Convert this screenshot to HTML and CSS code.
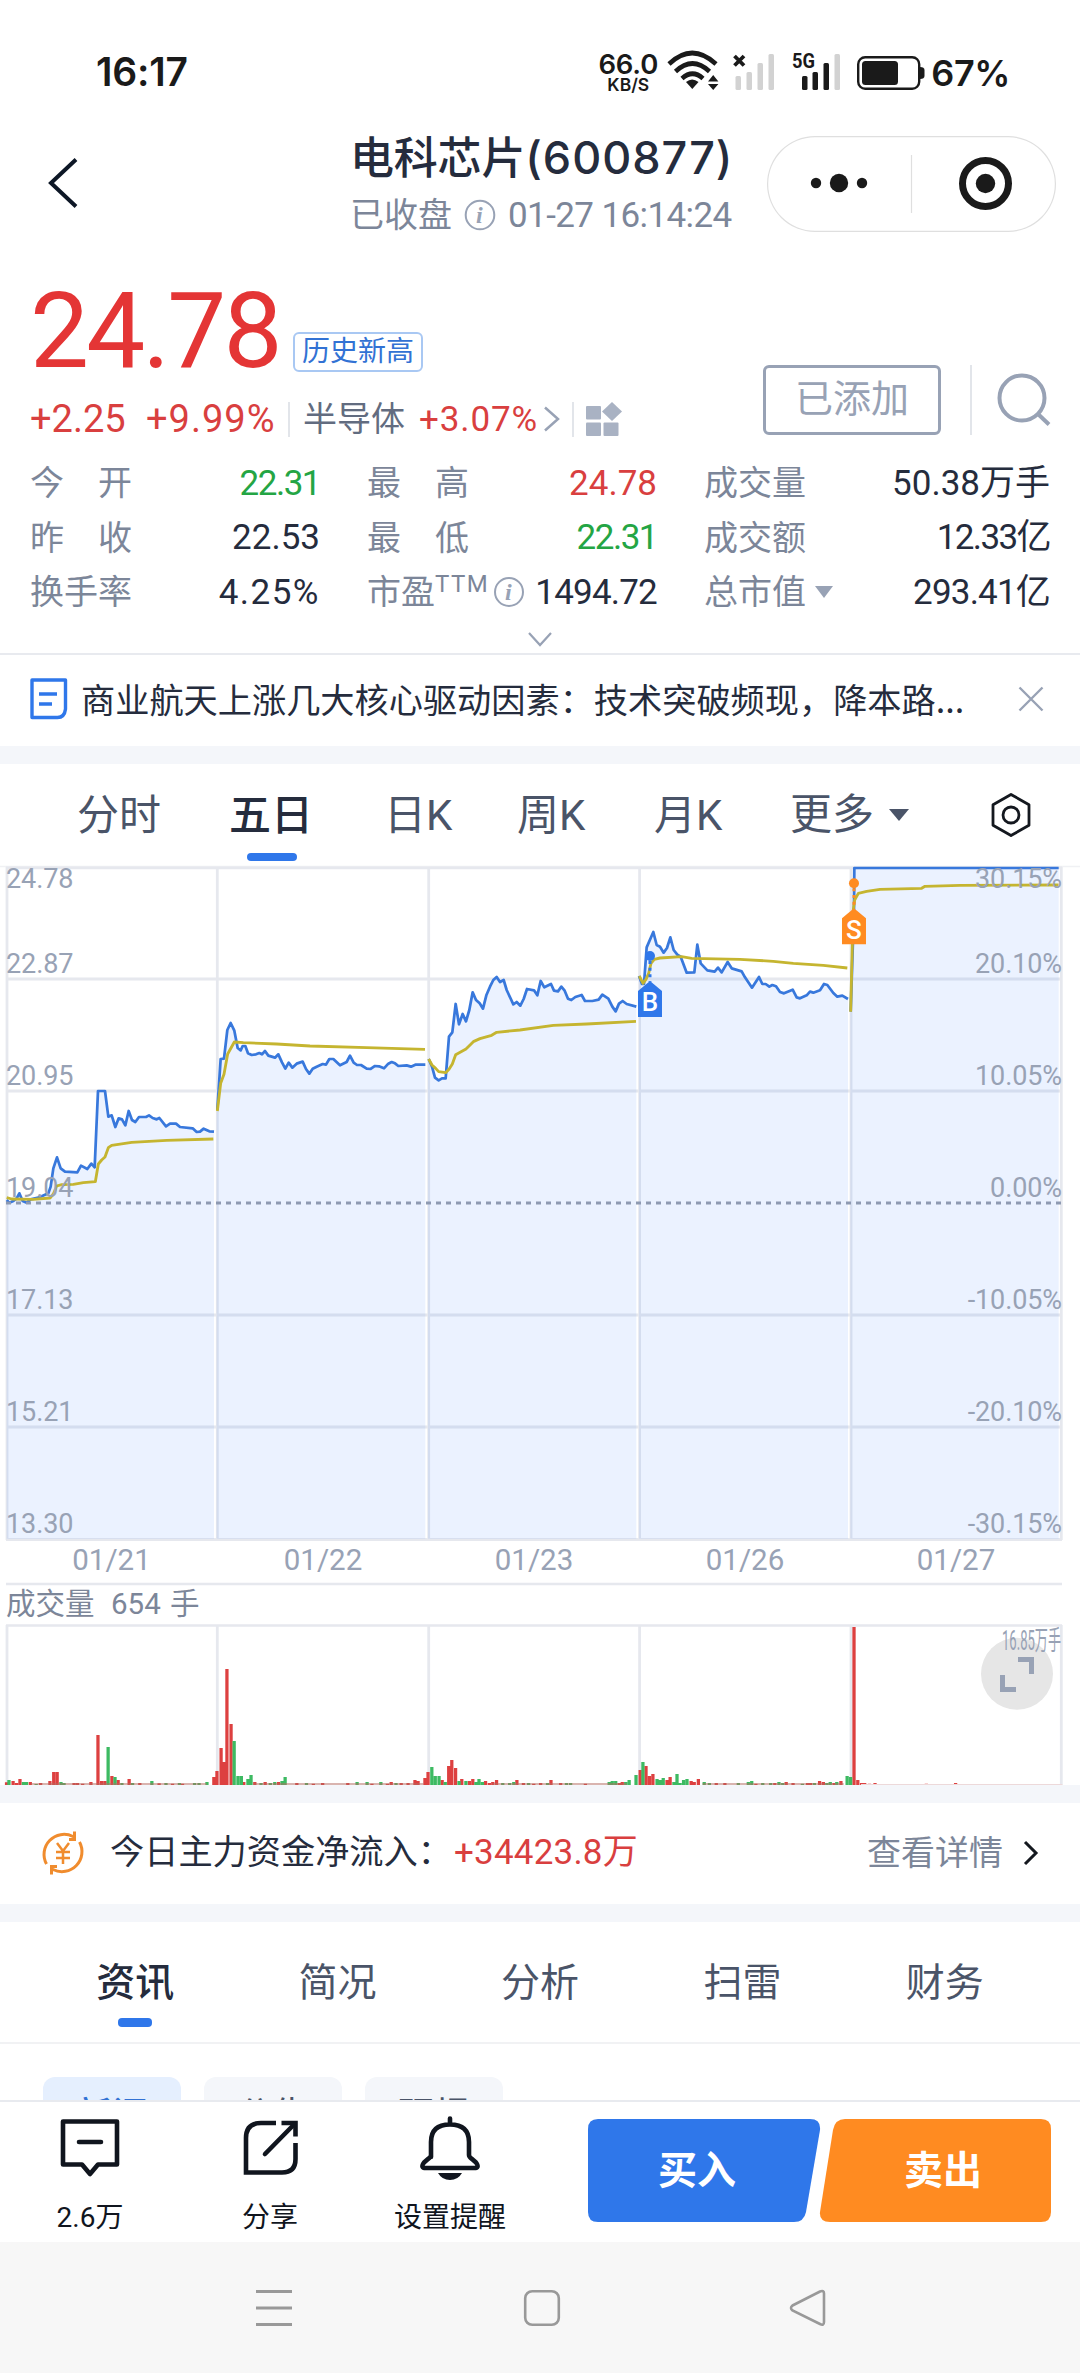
FILE: index.html
```html
<!DOCTYPE html>
<html lang="zh-CN">
<head>
<meta charset="utf-8">
<title>电科芯片(600877)</title>
<link rel="stylesheet" href="styles.css">
</head>
<body>
<div class="status">
  <span class="clock">16:17</span>
  <div class="status-right">
    <div class="speed"><b>66.0</b><i>KB/S</i></div>
    <svg class="signals" width="262" height="44" viewBox="0 0 262 44">
      <g fill="none" stroke="#1a1a1a" stroke-width="4.6">
        <path d="M2 16Q25-6 49 16"/><path d="M8.500 23.500Q25.500 7.500 42.500 23.500"/><path d="M15 30.500Q25.500 21 36 30.500"/>
      </g>
      <path d="M19 34Q25 29 31.500 34L25.300 41z" fill="#1a1a1a"/>
      <path d="M41 33.500h10.400L46.200 27zM41 36h10.400L46.200 42z" fill="#1a1a1a"/>
      <path d="M67.500 8l9.500 9.500M77 8l-9.500 9.500" stroke="#1a1a1a" stroke-width="3.800"/>
      <g fill="#d2d2d2"><rect x="68.500" y="28" width="5.500" height="14" rx="1.500"/><rect x="79.500" y="24" width="5.500" height="18" rx="1.500"/><rect x="90.500" y="15" width="5.500" height="27" rx="1.500"/><rect x="101.500" y="6" width="5.500" height="36" rx="1.500"/><rect x="167.500" y="6" width="5.500" height="36" rx="1.500"/></g>
      <g fill="#1a1a1a"><rect x="135" y="28" width="5.500" height="14" rx="1.500"/><rect x="145.500" y="24" width="5.500" height="18" rx="1.500"/><rect x="156.500" y="15" width="5.500" height="27" rx="1.500"/></g>
      <text x="125" y="20" font-size="20" font-weight="700" textLength="23" lengthAdjust="spacingAndGlyphs" fill="#1a1a1a">5G</text>
      <rect x="191.200" y="9.200" width="61" height="31.600" rx="7" fill="#fff" stroke="#1a1a1a" stroke-width="2.400"/>
      <rect x="195" y="13" width="36" height="24" rx="3.500" fill="#1a1a1a"/>
      <path d="M253 19q4.500 0 4.500 3v6q0 3-4.500 3z" fill="#1a1a1a"/>
    </svg>
    <span class="percent">67%</span>
  </div>
</div>

<header class="header">
  <svg class="back" width="34" height="52" viewBox="0 0 34 52"><path d="M30 2.500L5 26l25 23.500" fill="none" stroke="#0d1726" stroke-width="4"/></svg>
  <div class="title-block">
    <h1>电科芯片<span>(600877)</span></h1>
    <p><span>已收盘</span><svg class="info" width="32" height="32" viewBox="0 0 32 32"><circle cx="16" cy="16" r="14.300"/><text x="12" y="24">i</text></svg><span class="stamp">01-27 16:14:24</span></p>
  </div>
  <div class="capsule">
    <svg width="289" height="95" viewBox="0 0 289 95">
      <path d="M144.500 19v58" stroke="#dfdfdf" stroke-width="1.200"/>
      <g fill="#1a1a1a"><circle cx="49" cy="47" r="5.200"/><circle cx="72" cy="47" r="9.200"/><circle cx="95" cy="47" r="5.200"/><circle cx="218.500" cy="47.500" r="9.700"/></g>
      <circle cx="218.500" cy="47.500" r="23" fill="none" stroke="#1a1a1a" stroke-width="7"/>
    </svg>
  </div>
</header>

<section class="quote">
  <div class="quote-main">
    <div class="price-row"><span class="price">24.78</span><span class="badge">历史新高</span></div>
    <div class="change-row">
      <span class="chg">+2.25</span><span class="pct">+9.99%</span><i class="vr"></i>
      <span class="sector">半导体</span><span class="sector-pct">+3.07%</span>
      <svg width="18" height="26" viewBox="0 0 18 26"><path d="M2 1.500L15 13 2 24.500" fill="none" stroke="#98a2b5" stroke-width="2.500"/></svg>
      <i class="vr"></i>
      <svg class="tiles" width="38" height="36" viewBox="0 0 38 36" fill="#a9b2c3"><rect x="0" y="5" width="15" height="13.500" rx="1"/><rect x="0" y="21.500" width="15" height="13.500" rx="1"/><rect x="17.500" y="21.500" width="15" height="13.500" rx="1"/><path d="M26 1l10 9.500-10 9.500-10-9.500z"/></svg>
    </div>
  </div>
  <div class="quote-actions">
    <span class="added">已添加</span><i class="vr tall"></i>
    <svg width="56" height="56" viewBox="0 0 56 56"><g fill="none" stroke="#98a2b5" stroke-width="4"><circle cx="26" cy="26" r="22.500"/><path d="M42 42l11 10.500"/></g></svg>
  </div>
</section>

<section class="stats">
  <div class="stat"><span class="label spread"><b>今</b><b>开</b></span><span class="val down">22.31</span></div>
  <div class="stat"><span class="label spread"><b>最</b><b>高</b></span><span class="val up">24.78</span></div>
  <div class="stat"><span class="label">成交量</span><span class="val">50.38万手</span></div>
  <div class="stat"><span class="label spread"><b>昨</b><b>收</b></span><span class="val">22.53</span></div>
  <div class="stat"><span class="label spread"><b>最</b><b>低</b></span><span class="val down">22.31</span></div>
  <div class="stat"><span class="label">成交额</span><span class="val tight">12.33亿</span></div>
  <div class="stat"><span class="label">换手率</span><span class="val wide">4.25%</span></div>
  <div class="stat"><span class="label">市盈<em>TTM</em><svg class="info" width="32" height="32" viewBox="0 0 32 32"><circle cx="16" cy="16" r="14"/><text x="12" y="24">i</text></svg></span><span class="val snug">1494.72</span></div>
  <div class="stat"><span class="label">总市值<i class="tri"></i></span><span class="val snug">293.41亿</span></div>
</section>
<div class="expand"><svg width="26" height="17" viewBox="0 0 26 17"><path d="M2 2l11 12L24 2" fill="none" stroke="#98a2b5" stroke-width="2.200"/></svg></div>

<section class="news">
  <svg width="38" height="42" viewBox="0 0 38 42"><g fill="none" stroke="#2f77ea" stroke-width="3.400"><path d="M2 2h33.500v29q-1 8.500-8 8.500H2z" stroke-linejoin="round"/><path d="M9 16h18M9 26h13"/></g></svg>
  <p>商业航天上涨几大核心驱动因素：技术突破频现，降本路...</p>
  <svg width="26" height="26" viewBox="0 0 26 26"><path d="M1.500 1.500l23 23M24.500 1.500l-23 23" stroke="#98a2b5" stroke-width="2.400"/></svg>
</section>
<div class="band"></div>

<nav class="periods">
  <span>分时</span><span class="on">五日</span><span>日K</span><span>周K</span><span>月K</span><span class="more">更多<i class="tri dark"></i></span>
  <svg width="42" height="46" viewBox="0 0 42 46"><g fill="none" stroke="#14181f" stroke-width="2.800" stroke-linejoin="round"><path d="M21 2.500l18 10.200v20.600L21 43.500 3 33.300V12.700z"/><circle cx="21" cy="23" r="8"/></g></svg>
</nav>

<section class="chart">
<svg width="1080" height="920" viewBox="0 865 1080 920">
  <path d="M0 866.500H1080" stroke="#f0f1f4" stroke-width="1.500"/>
  <g stroke="#e6e8ee" stroke-width="2.800" fill="none">
    <path d="M6 867.800H1062M6 979H1062M6 1091H1062M6 1315H1062M6 1427H1062M6 1539.500H1062"/>
    <path d="M7 867V1540M217.300 867V1540M428.700 867V1540M639.600 867V1540M851 867V1540M1061.300 867V1540"/>
  </g>
  <!-- price series, one area per trading day; units are thirds of a pixel -->
  <g transform="translate(0 850) scale(.33333)">
    <g fill="#1f6fff" fill-opacity=".09">
      <path d="M20 2066V1050L28 1058 40 1053 50 1045 58 1030 68 1053 80 1058 92 1048 115 1043 145 1030 152 1010 160 955 171 922 182 955 195 965 232 967 243 947 262 957 274 941 284 952 294 723 315 723 325 800 335 796 346 831 356 805 366 808 376 826 386 783 396 810 406 816 417 801 438 801 447 796 458 804 470 808 478 804 498 829 510 821 528 821 540 831 578 835 590 846 600 845 611 836 628 844 642 845V2066z"/>
      <path d="M650 2066V780L662 627 672 626 682 540 692 519 703 542 713 594 722 601 728 588 736 588 744 610 755 615 768 613 778 609 786 613 795 603 805 617 825 623 835 613 846 637 856 656 866 638 877 653 890 641 908 635 918 657 928 671 938 656 950 650 968 642 978 644 988 627 1000 627 1020 646 1040 636 1050 617 1061 638 1071 645 1083 645 1100 656 1112 657 1125 648 1137 649 1152 655 1165 641 1175 636 1185 640 1195 648 1220 646 1233 650 1246 644 1276 644V2066z"/>
      <path transform="translate(1260)" d="M24 2066V627L36 650 45 683 56 691 66 685 77 685 87 560 97 547 107 462 117 523 128 492 138 514 148 480 158 427 168 450 179 460 189 476 199 436 210 410 220 390 230 381 240 396 251 390 260 420 280 463 290 456 301 467 311 447 321 417 342 421 352 436 362 393 373 412 393 402 402 422 414 424 424 410 434 422 444 446 454 450 466 441 485 435 495 453 517 453 536 449 547 434 565 446 577 470 587 484 597 461 608 453 620 462 649 470V2066z"/>
      <path transform="translate(1260)" d="M657 2066V378L666 402 672 402 680 292 700 246 710 285 720 290 731 308 741 294 751 262 761 300 772 314 782 320 800 368 823 367 832 284 842 340 862 361 884 365 894 353 905 367 923 336 935 355 965 364 975 382 996 413 1017 381 1027 402 1037 402 1048 410 1057 405 1068 409 1080 426 1092 430 1118 419 1130 442 1140 445 1160 436 1170 425 1180 428 1200 421 1212 402 1222 405 1240 429 1252 440 1267 437 1284 447V2066z"/>
      <path transform="translate(1860)" d="M691 2066V485L703 52H1316V2066z"/>
    </g>
    <g fill="none" stroke="#3878dc" stroke-width="8.200" stroke-linejoin="round">
      <path d="M20 1050L28 1058 40 1053 50 1045 58 1030 68 1053 80 1058 92 1048 115 1043 145 1030 152 1010 160 955 171 922 182 955 195 965 232 967 243 947 262 957 274 941 284 952 294 723 315 723 325 800 335 796 346 831 356 805 366 808 376 826 386 783 396 810 406 816 417 801 438 801 447 796 458 804 470 808 478 804 498 829 510 821 528 821 540 831 578 835 590 846 600 845 611 836 628 844 642 845"/>
      <path d="M652 780L662 627 672 626 682 540 692 519 703 542 713 594 722 601 728 588 736 588 744 610 755 615 768 613 778 609 786 613 795 603 805 617 825 623 835 613 846 637 856 656 866 638 877 653 890 641 908 635 918 657 928 671 938 656 950 650 968 642 978 644 988 627 1000 627 1020 646 1040 636 1050 617 1061 638 1071 645 1083 645 1100 656 1112 657 1125 648 1137 649 1152 655 1165 641 1175 636 1185 640 1195 648 1220 646 1233 650 1246 644 1276 644"/>
      <path transform="translate(1260)" d="M26 627L36 650 45 683 56 691 66 685 77 685 87 560 97 547 107 462 117 523 128 492 138 514 148 480 158 427 168 450 179 460 189 476 199 436 210 410 220 390 230 381 240 396 251 390 260 420 280 463 290 456 301 467 311 447 321 417 342 421 352 436 362 393 373 412 393 402 402 422 414 424 424 410 434 422 444 446 454 450 466 441 485 435 495 453 517 453 536 449 547 434 565 446 577 470 587 484 597 461 608 453 620 462 649 470"/>
      <path transform="translate(1260)" d="M657 378L666 402 672 402 680 292 700 246 710 285 720 290 731 308 741 294 751 262 761 300 772 314 782 320 800 368 823 367 832 284 842 340 862 361 884 365 894 353 905 367 923 336 935 355 965 364 975 382 996 413 1017 381 1027 402 1037 402 1048 410 1057 405 1068 409 1080 426 1092 430 1118 419 1130 442 1140 445 1160 436 1170 425 1180 428 1200 421 1212 402 1222 405 1240 429 1252 440 1267 437 1284 447"/>
      <path transform="translate(1860)" d="M692 485L702 178 703 54H1316"/>
    </g>
    <g fill="none" stroke="#c5b530" stroke-width="8.500" stroke-linejoin="round">
      <path d="M20 1043L35 1047 100 1048 150 1044 160 1032 170 1008 185 1004 220 1003 250 998 286 995 295 942 305 930 315 921 325 893 335 886 395 877 500 871 640 867"/>
      <path d="M652 783L662 700 672 673 683 612 703 576 730 578 830 582 930 588 1100 593 1275 598"/>
      <path transform="translate(1260)" d="M26 627L36 645 47 655 56 665 77 668 87 658 97 642 107 614 138 597 160 575 180 566 215 556 230 547 300 540 400 526 500 522 648 514"/>
      <path transform="translate(1260)" d="M658 378L669 400 678 388 686 370 693 340 703 328 720 324 785 320 815 325 960 328 1060 334 1120 340 1210 346 1282 354"/>
      <path transform="translate(1860)" d="M692 485L697 285 700 178 704 150 715 130 740 124 780 118 905 115 915 109 1020 106 1316 105"/>
    </g>
    <g fill="#2f77ea"><circle cx="1950" cy="318" r="15"/><path d="M1950 333V395" stroke="#2f77ea" stroke-width="9" stroke-dasharray="9 11"/><path d="M1950 393l36 30v78h-72v-78z"/></g>
    <g fill="#ff8b21"><circle cx="2562" cy="100" r="15"/><path d="M2562 115V175" stroke="#ff8b21" stroke-width="9" stroke-dasharray="9 11"/><path d="M2562 175l36 30v78h-72v-78z"/></g>
    <g class="tag"><text x="1950" y="484">B</text><text x="2562" y="267">S</text></g>
  </g>
  <path d="M6 1203H1062" stroke="#8e9ab2" stroke-width="3" stroke-dasharray="5 5"/>
  <g class="axis">
    <text x="6" y="887.500">24.78</text><text x="6" y="973">22.87</text><text x="6" y="1085">20.95</text><text x="6" y="1197">19.04</text><text x="6" y="1309">17.13</text><text x="6" y="1421">15.21</text><text x="6" y="1533">13.30</text>
  </g>
  <g class="axis end">
    <text x="1062" y="887.500">30.15%</text><text x="1062" y="973">20.10%</text><text x="1062" y="1085">10.05%</text><text x="1062" y="1197">0.00%</text><text x="1062" y="1309">-10.05%</text><text x="1062" y="1421">-20.10%</text><text x="1062" y="1533">-30.15%</text>
  </g>
  <g class="dates"><text x="111.500" y="1570">01/21</text><text x="323" y="1570">01/22</text><text x="534" y="1570">01/23</text><text x="745" y="1570">01/26</text><text x="956" y="1570">01/27</text></g>
  <path d="M6 1584H1062M6 1625.500H1062" stroke="#e6e8ee" stroke-width="2.600"/>
  <text class="vol" x="6" y="1614" xml:space="preserve">成交量</text><text class="vol" x="111" y="1614">654</text><text class="vol" x="170" y="1614">手</text>
  <path d="M7 1625V1785M217.300 1625V1785M428.700 1625V1785M639.600 1625V1785M851 1625V1785M1061.300 1625V1785" stroke="#e6e8ee" stroke-width="2.800"/>
  <!-- volume bars -->
  <g transform="translate(0 1500) scale(.34436 .33333)" fill="none" stroke-width="9.500">
    <path stroke="#dd4040" d="M19 855v-8M38 855v-12M48 855v-6M58 855v-18M88 855v-9M118 855v-6M145 855v-12M156 855v-39M166 855v-39M215 855v-6M225 855v-6M240 855v-4M264 855v-9M284.500 855v-150M295 855v-12M305 855v-12M325 855v-27M343 855v-15M375 855v-18M406 855v-6M462 855v-5M501 855v-4M530 855v-4M621 855v-24M630 855v-42M642 855v-111M651 855v-69M659 855v-348M671 855v-183M708 855v-9M740 855v-9M770 855v-9M809 855v-9M862 855v-6M910 855v-4M937 855v-6M1010 855v-6M1080 855v-4M1125 855v-4M1136 855v-9M1165 855v-6M1185 855v-6M1205 855v-15M1214 855v-12M1234 855v-21M1243 855v-39M1284 855v-15M1303 855v-57M1312 855v-75M1323 855v-51M1341 855v-18M1363 855v-12M1373 855v-18M1410 855v-12M1421 855v-6M1431 855v-9M1442 855v-15M1501 855v-15M1520 855v-6M1550 855v-4M1570 855v-6M1600 855v-15M1628 855v-6M1700 855v-4M1798 855v-6M1807 855v-9M1859 855v-45M1876 855v-57M1886 855v-27M1896 855v-33M1937 855v-15M1946 855v-24M2007 855v-12M2016 855v-9M2028 855v-18M2080 855v-6M2105 855v-6M2195 855v-4M2250 855v-6M2283 855v-9M2303 855v-6M2345 855v-6M2354 855v-6M2380 855v-12M2391 855v-9M2422 855v-6M2442 855v-12M2480 855v-474M2491 855v-15M2502 855v-6M2511 855v-6M2525 855v-4M2541 855v-6M2565 855v-3M2608 855v-3M2690 855v-4M2775 855v-6M3075 855v-3"/>
    <path stroke="#3dba62" d="M26 855v-15M68 855v-9M77 855v-9M105 855v-3M177 855v-9M186 855v-6M314 855v-114M334 855v-24M354 855v-6M385 855v-6M441 855v-12M482 855v-6M521 855v-6M565 855v-6M578 855v-6M601 855v-9M680 855v-132M691 855v-27M701 855v-27M720 855v-18M729 855v-30M758 855v-6M785 855v-6M798 855v-9M819 855v-12M828 855v-24M890 855v-6M1037 855v-9M1066 855v-9M1106 855v-9M1150 855v-6M1254 855v-54M1264 855v-27M1275 855v-27M1293 855v-9M1333 855v-12M1353 855v-12M1382 855v-9M1391 855v-18M1401 855v-9M1460 855v-6M1480 855v-6M1492 855v-9M1535 855v-6M1590 855v-6M1645 855v-6M1657 855v-6M1769 855v-9M1778 855v-12M1788 855v-12M1817 855v-9M1827 855v-15M1847 855v-30M1867 855v-69M1908 855v-18M1917 855v-15M1926 855v-21M1957 855v-9M1966 855v-33M1975 855v-6M1985 855v-15M1995 855v-18M2045 855v-9M2060 855v-6M2144 855v-6M2173 855v-9M2183 855v-12M2215 855v-6M2238 855v-6M2262 855v-9M2273 855v-6M2330 855v-4M2365 855v-6M2401 855v-6M2411 855v-9M2430 855v-9M2460 855v-27M2470 855v-24"/>
    <path stroke="#b46a61" stroke-width="3" d="M90 852H600M735 852H1230M1430 852H1820M2040 852H2450"/>
    <path stroke="#edd9da" stroke-width="3" d="M2500 853.500H3085"/>
  </g>
  <circle cx="1017" cy="1673.700" r="36" fill="#e6e6e6"/>
  <path d="M1018 1659.500h13.500v14.500M1002.500 1675v14.500h13.500" fill="none" stroke="#98a2b5" stroke-width="5"/>
  <text class="vmax" x="1002" y="1650" textLength="59" lengthAdjust="spacingAndGlyphs">16.85万手</text>
</svg>
</section>
<div class="band"></div>

<section class="flow">
  <svg width="46" height="48" viewBox="0 0 46 48"><g fill="none" stroke="#f08c2e" stroke-width="3"><path d="M6.500 35A20 20 0 0 1 33 7.500l2 1M34.500 2.500v8H29"/><path d="M39.500 13A20 20 0 0 1 13 40.500l-2-1M11.500 45.500v-8H17"/><path d="M17 14l6 8 6-8M23 22v13M16 23h14M16 29h14" stroke-width="2.500"/></g></svg>
  <span class="flow-label">今日主力资金净流入：</span><span class="flow-val">+34423.8万</span>
  <span class="detail">查看详情</span>
  <svg width="16" height="26" viewBox="0 0 16 26"><path d="M2 2l11 11L2 24" fill="none" stroke="#14181f" stroke-width="3"/></svg>
</section>
<div class="band"></div>

<nav class="sections"><span class="on">资讯</span><span>简况</span><span>分析</span><span>扫雷</span><span>财务</span></nav>
<div class="chips"><span class="on">新闻</span><span>公告</span><span>研报</span></div>

<footer class="actions">
  <div class="act"><svg width="62" height="68" viewBox="0 0 62 68"><path d="M4 7.500h54v43H39L31 60l-8-9.500H4z M20 28h22" fill="none" stroke="#10151e" stroke-width="4.600" stroke-linejoin="round" stroke-linecap="round"/></svg><span>2.6万</span></div>
  <div class="act"><svg width="62" height="68" viewBox="0 0 62 68"><path d="M37 9H22Q7 9 7 24V58.500H43Q56.500 58.500 56.500 45V29M42.500 9H56.500V22.500" fill="none" stroke="#10151e" stroke-width="4.600"/><path d="M26 40L55 10.500" fill="none" stroke="#10151e" stroke-width="4.600" stroke-linecap="round"/></svg><span>分享</span></div>
  <div class="act"><svg width="62" height="68" viewBox="0 0 62 68"><path d="M31 4.500V10M12 43V28Q12 10.500 31 10.500T50 28v13q0 2 3 4l4 3.500q4 5.500-2 5.500H7q-6 0-2-5.500l4-3.500q3-2 3-4z" fill="none" stroke="#10151e" stroke-width="4.600" stroke-linecap="round" stroke-linejoin="round"/><path d="M19 59h24q-4 7-12 7t-12-7z" fill="#10151e"/></svg><span>设置提醒</span></div>
  <div class="trade">
    <svg width="463" height="104" viewBox="0 0 463 104"><path d="M10 0H222q11 0 10 11l-14 82q-2 10-12 10H10Q0 103 0 93V10Q0 0 10 0z" fill="#2f77ea"/><path d="M257 0H453q10 0 10 10V93q0 10-10 10H242q-11 0-10-10l13-82q2-11 12-11z" fill="#ff8b21"/></svg>
    <span class="buy">买入</span><span class="sell">卖出</span>
  </div>
</footer>
<div class="sysnav">
  <svg width="1080" height="132" viewBox="0 0 1080 132" fill="none" stroke="#999" stroke-width="3"><path d="M256 49.500h36M256 66h36M256 82.500h36"/><rect x="525.200" y="49.200" width="33.600" height="33.600" rx="7" stroke-width="2.600"/><path d="M792.500 63.500L820 49.500q4-1.500 4 2V80q0 4-4 2L792.500 68.500q-3-2.500 0-5z" stroke-width="2.600"/></svg>
</div>
</body>
</html>
```
FILE: styles.css
```css
* { box-sizing: border-box; }
body { margin: 0; width: 1080px; height: 2373px; overflow: hidden; background: #fff; color: #252c3d; font-family: Roboto, "Noto Sans CJK SC", sans-serif; font-size: 34px; line-height: 1; display: flex; flex-direction: column; }
body > * { flex: none; }
h1, p { margin: 0; font-weight: 400; }
i, em { font-style: normal; }
svg { display: block; flex: none; }
span { white-space: nowrap; }

.status { height: 126px; padding: 48px 72px 0 96px; display: flex; justify-content: space-between; align-items: flex-start; font-family: Inter, sans-serif; color: #1a1a1a; font-weight: 600; }
.clock { font-size: 39px; line-height: 47px; letter-spacing: -.2px; }
.status-right { display: flex; align-items: flex-start; }
.speed { width: 62px; display: flex; flex-direction: column; align-items: center; margin-right: 8px; }
.speed b { font-size: 27.500px; line-height: 23px; margin-top: 5px; font-weight: 600; letter-spacing: -.2px; }
.speed i { font-size: 17.500px; line-height: 17px; font-weight: 600; }
.signals { margin-top: 0; font-family: Roboto, sans-serif; }
.percent { font-size: 36px; line-height: 50px; margin-left: 2px; margin-right: -2px; letter-spacing: -.4px; }

.header { height: 120px; display: flex; position: relative; padding: 10px 24px 0 46px; }
.back { margin-top: 21px; }
.title-block { margin-left: 270px; width: 381px; }
h1 { font: 500 44px/44px Inter, "Noto Sans CJK SC", sans-serif; letter-spacing: -.2px; white-space: nowrap; }
h1 span { font-size: 45px; letter-spacing: 1px; }
.title-block p { display: flex; align-items: center; height: 34px; margin-top: 18px; color: #7c8699; }
.stamp { letter-spacing: -.6px; font-size: 35px; }
.info { margin: 0 12px; }
.info circle { fill: none; stroke: #98a2b5; stroke-width: 2; }
.info text { font: italic 700 24px "Liberation Serif", serif; fill: #98a2b5; }
.capsule { width: 289px; height: 96px; margin-left: 36px; border-radius: 48px; box-shadow: inset 0 0 0 1.200px #dfdfdf; }

.quote { height: 210px; display: flex; justify-content: space-between; padding: 0 28px 0 30px; }
.price-row { display: flex; height: 126px; align-items: flex-end; }
.price { font-size: 105px; line-height: 104px; height: 104px; letter-spacing: -2.800px; color: #e43535; width: 263px; margin-bottom: -12px; }
.badge { border: 2px solid #a9c8f3; border-radius: 6px; width: 130px; height: 40px; font-size: 28px; line-height: 36px; text-align: center; color: #3272d4; }
.change-row { display: flex; align-items: center; height: 36px; margin-top: 29px; color: #d93f3f; font-size: 38px; }
.chg { width: 116px; }
.pct { width: 142px; letter-spacing: 1px; }
.vr { width: 2px; height: 35px; background: #e2e5ea; }
.sector { width: 116px; margin-left: 13px; color: #626c80; font-size: 34px; }
.sector-pct { font-size: 35px; width: 124px; letter-spacing: .9px; }
.change-row svg + .vr { margin-left: 11px; }
.tiles { margin-left: 12px; }
.quote-actions { display: flex; align-items: center; height: 70px; margin-top: 119px; }
.added { width: 178px; height: 70px; border: 3px solid #98a2b5; border-radius: 6px; color: #98a2b5; font-size: 38px; line-height: 62px; text-align: center; }
.vr.tall { height: 70px; margin: 0 24px 0 29px; }

.stats { display: grid; grid-template-columns: 290px 290px 346px; column-gap: 47px; grid-auto-rows: 54.600px; height: 164px; padding-left: 30px; }
.stat { display: flex; justify-content: space-between; align-items: center; }
.label { color: #7c8699; display: flex; align-items: center; }
.spread { width: 102px; justify-content: space-between; }
.spread b { font-weight: 400; }
.label em { font-size: 24px; align-self: flex-start; margin-top: -3px; letter-spacing: 1.500px; }
.label .info { margin: 0 0 0 4px; }
.val { font-size: 35px; }
.up { color: #d93f3f; }
.down { color: #24a544; letter-spacing: -1.500px; }
.tight { letter-spacing: -1.600px; }
.snug { letter-spacing: -.8px; }
.wide { letter-spacing: 1.500px; }
.tri { border: 9px solid transparent; border-top: 12px solid #98a2b5; border-bottom: 0; margin-left: 9px; }
.tri.dark { border-width: 12px 10.500px 0; border-top-color: #4a5468; margin-left: 15px; }
.expand { height: 33px; padding: 11px 0 0 527px; }

.news { height: 93px; border-top: 2px solid #e8eaef; display: flex; align-items: center; padding: 0 36px 4px 30px; }
.news p { font-family: "Noto Sans CJK SC", sans-serif; font-size: 34.200px; white-space: nowrap; margin-left: 13px; width: 937px; }
.band { height: 18px; background: #f4f6fa; }

.periods { height: 101px; position: relative; display: flex; align-items: center; padding-left: 77px; color: #4a5468; font-size: 42px; font-weight: 400; }
.periods span { height: 101px; line-height: 103px; }
.periods span:nth-child(1) { width: 152px; }
.periods span:nth-child(2) { width: 155px; }
.periods span:nth-child(3) { width: 133px; }
.periods span:nth-child(4) { width: 137px; }
.periods span:nth-child(5) { width: 136px; }
.periods .more { display: flex; align-items: center; width: 200px; }
.periods .on, .sections .on { color: #252c3d; font-weight: 500; position: relative; }
.periods .on::after { content: ""; position: absolute; left: 18px; bottom: 4px; width: 50px; height: 8px; border-radius: 4px; background: #2f77ea; }

.chart { height: 920px; }
.axis text { font-size: 27px; fill: #98a2b5; letter-spacing: -.1px; }
.end { text-anchor: end; }
.dates { font-size: 29.500px; fill: #98a2b5; text-anchor: middle; }
.vol { font-size: 29.500px; fill: #7c8699; }
.vmax { font-size: 27px; fill: #98a2b5; }
.tag text { font: 500 78px Roboto, sans-serif; fill: #fff; text-anchor: middle; }

.flow { height: 101px; display: flex; align-items: center; padding: 0 41px 2px 40px; }
.flow-label { margin-left: 24px; width: 344px; font-size: 34.200px; }
.flow-val { color: #d93f3f; font-size: 35px; flex: 1; letter-spacing: .2px; }
.detail { color: #7c8699; margin-right: 20px; }

.sections { height: 122px; border-bottom: 2px solid #f1f2f4; display: flex; justify-content: center; padding: 0 34px; color: #4a5468; font-size: 39px; }
.sections span { flex: 1; text-align: center; line-height: 123px; }
.sections .on::after { content: ""; position: absolute; left: 84px; top: 96px; width: 34px; height: 9px; border-radius: 4px; background: #2f77ea; }
.chips { height: 56px; overflow: hidden; padding: 33px 43px 0; display: flex; gap: 23px; }
.chips span { flex: none; width: 138px; height: 76px; border-radius: 12px; background: #f4f6fa; color: #4a5468; font-size: 36px; line-height: 79px; text-align: center; }
.chips .on { background: #e5effe; color: #3272d4; font-weight: 500; }

.actions { height: 142px; border-top: 2px solid #e8eaef; display: flex; color: #10151e; font-size: 28px; padding: 12px 29px 0 0; }
.act { width: 180px; display: flex; flex-direction: column; align-items: center; gap: 22px; }
.trade { position: relative; margin-left: 48px; margin-top: 5px; color: #fff; font-size: 39px; font-weight: 700; }
.trade span { position: absolute; top: 33px; }
.buy { left: 70px; }
.sell { left: 316px; }
.sysnav { height: 132px; background: #f7f7f7; }
```
